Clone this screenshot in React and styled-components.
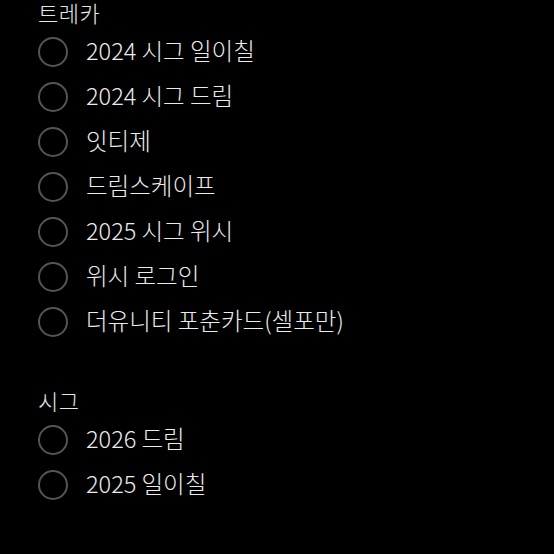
import React from "react";
import styled, { createGlobalStyle } from "styled-components";

const Global = createGlobalStyle`
  html, body { margin: 0; padding: 0; background: #000; }
  body { font-family: "Noto Sans CJK KR", "Noto Sans", sans-serif; }
`;

const Page = styled.div`
  width: 554px;
  height: 554px;
  background: #000;
  padding-left: 38px;
  box-sizing: border-box;
  overflow: hidden;
`;

const Section = styled.section`
  display: flex;
  flex-direction: column;
  & + & { margin-top: 44px; }
`;

const Title = styled.div`
  color: #e6e6e6;
  font-size: 22px;
  font-weight: 300;
  line-height: 24px;
  height: 24px;
  margin-bottom: 5px;
  letter-spacing: 0.5px;
`;

const List = styled.div`
  display: flex;
  flex-direction: column;
`;

const Row = styled.label`
  display: flex;
  align-items: center;
  height: 45px;
  gap: 18px;
`;

const Circle = styled.span`
  width: 30px;
  height: 30px;
  border: 2px solid #555;
  border-radius: 50%;
  box-sizing: border-box;
  flex: none;
`;

const Label = styled.span`
  color: #ececec;
  font-size: 23.5px;
  font-weight: 300;
  line-height: 1;
  margin-top: -1px;
`;

const sections = [
  {
    title: "트레카",
    items: [
      "2024 시그 일이칠",
      "2024 시그 드림",
      "잇티제",
      "드림스케이프",
      "2025 시그 위시",
      "위시 로그인",
      "더유니티 포춘카드(셀포만)",
    ],
  },
  { title: "시그", items: ["2026 드림", "2025 일이칠"] },
];

export default function App() {
  return (
    <>
      <Global />
      <Page>
        {sections.map((s) => (
          <Section key={s.title}>
            <Title>{s.title}</Title>
            <List>
              {s.items.map((it) => (
                <Row key={it}>
                  <Circle />
                  <Label>{it}</Label>
                </Row>
              ))}
            </List>
          </Section>
        ))}
      </Page>
    </>
  );
}
